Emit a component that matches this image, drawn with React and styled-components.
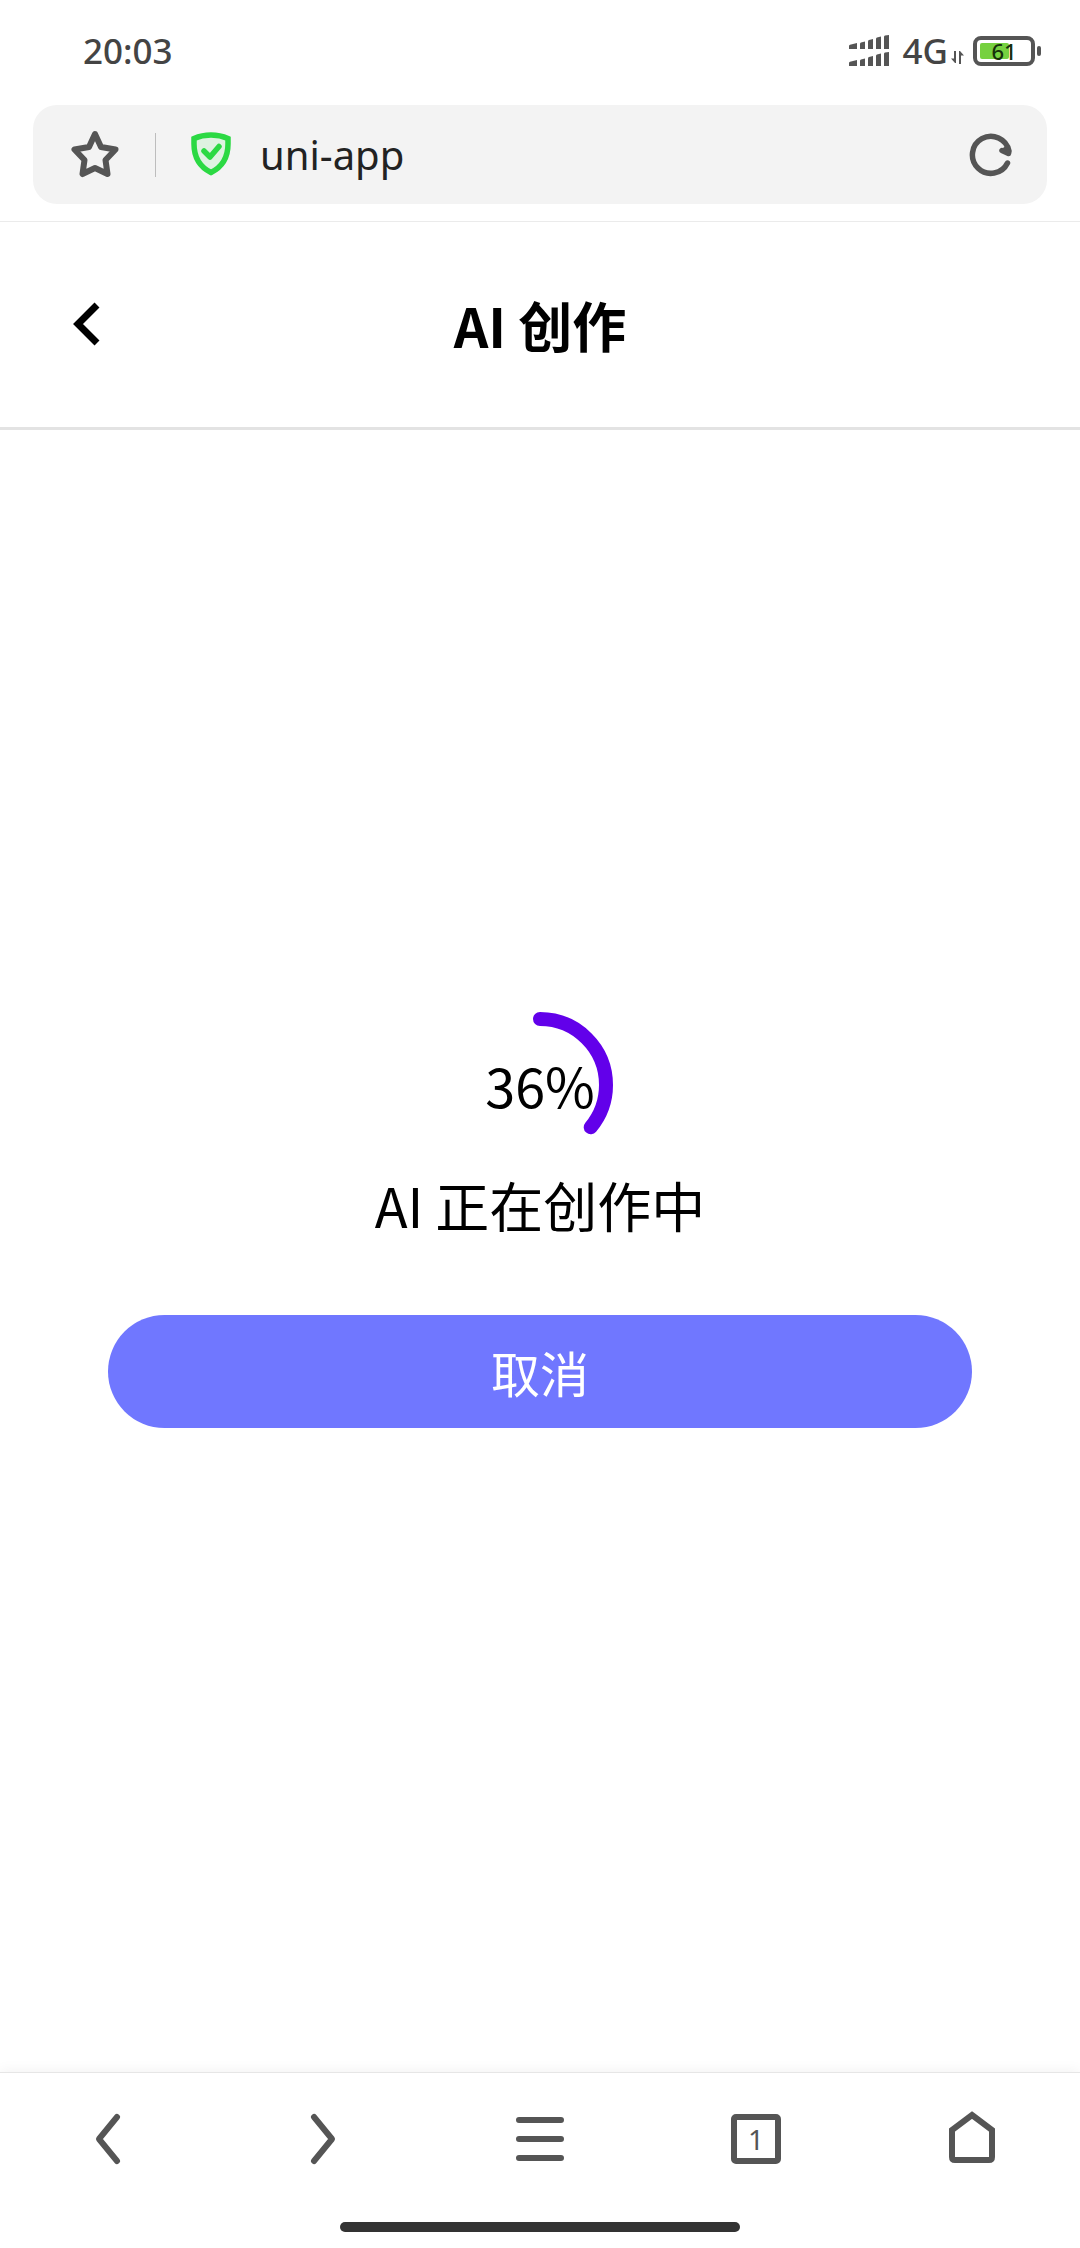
import React from "react";
import styled, { createGlobalStyle } from "styled-components";

const uiFont = `"Noto Sans", "Noto Sans CJK SC", sans-serif`;
const pageFont = `"Noto Sans CJK SC", "Noto Sans", sans-serif`;
const ink = "#555555";

const GlobalStyle = createGlobalStyle`
  *, *::before, *::after { box-sizing: border-box; }
  body { margin: 0; background: #ffffff; }
  button { margin: 0; padding: 0; border: 0; background: none; cursor: pointer; }
  svg { display: block; flex: none; }
`;

const Page = styled.div`
  display: flex;
  flex-direction: column;
  min-height: 100vh;
  background: #ffffff;
  font-family: ${pageFont};
  color: #000000;
`;

const StatusBar = styled.div`
  display: flex;
  align-items: center;
  justify-content: space-between;
  height: 101px;
  padding: 0 39px 0 83px;
  font-family: ${uiFont};
  font-size: 35px;
  font-weight: 500;
  line-height: 40px;
  color: #444444;
`;

const StatusIcons = styled.div`
  display: flex;
  align-items: center;
`;

const Network = styled.div`
  display: flex;
  align-items: flex-end;
  gap: 3px;
  margin: 0 9px 0 12px;

  svg { margin-bottom: 7px; }
`;

const Battery = styled.div`
  display: flex;
  align-items: center;
  gap: 2px;

  &::after {
    content: "";
    width: 4px;
    height: 10px;
    border-radius: 2px;
    background: ${ink};
  }
`;

const BatteryCell = styled.div`
  display: grid;
  align-items: center;
  width: 62px;
  height: 30px;
  padding: 0 3px;
  border: 4px solid ${ink};
  border-radius: 8px;
`;

const BatteryFill = styled.div`
  grid-area: 1 / 1;
  height: 16px;
  border-radius: 2px;
  background: #76d13f;
`;

const BatteryText = styled.span`
  grid-area: 1 / 1;
  font-size: 22px;
  line-height: 22px;
  text-align: center;
  color: #16300a;
`;

const AddressArea = styled.div`
  padding: 4px 33px 17px;
  border-bottom: 1px solid #ebebeb;
`;

const AddressBar = styled.div`
  display: flex;
  align-items: center;
  height: 99px;
  padding: 0 34px 0 37px;
  border-radius: 24px;
  background: #f3f3f3;
`;

const Divider = styled.span`
  width: 1px;
  height: 44px;
  margin: 0 34px 0 35px;
  background: #bdbdbd;
`;

const AddressInput = styled.input`
  flex: 1;
  min-width: 0;
  margin-left: 28px;
  padding: 0;
  border: 0;
  outline: 0;
  background: none;
  font-family: ${uiFont};
  font-size: 40px;
  line-height: 56px;
  color: #222222;
`;

const Header = styled.header`
  display: grid;
  grid-template-columns: 1fr auto 1fr;
  align-items: center;
  height: 208px;
  padding: 0 72px;
  border-bottom: 3px solid #e3e3e3;
`;

const BackButton = styled.button`
  justify-self: start;
`;

const Title = styled.h1`
  margin: 0;
  font-size: 54px;
  font-weight: 700;
  line-height: 80px;
`;

const Main = styled.main`
  flex: 1;
  display: flex;
  flex-direction: column;
  align-items: center;
  justify-content: center;
  padding: 0 10% 62px;
`;

const Progress = styled.div`
  display: grid;
  place-items: center;

  > * { grid-area: 1 / 1; }
`;

const Percent = styled.span`
  font-size: 54px;
  line-height: 80px;
`;

const Message = styled.p`
  margin: 7px 0 70px;
  font-size: 54px;
  line-height: 80px;
`;

const CancelButton = styled.button`
  width: 100%;
  height: 113px;
  border-radius: 57px;
  background: #7077ff;
  font-family: inherit;
  font-size: 49px;
  line-height: 72px;
  color: #ffffff;
`;

const BottomBar = styled.footer`
  border-top: 1px solid #e6e6e6;
  background: #ffffff;
  box-shadow: 0 -2px 12px rgba(0, 0, 0, 0.05);
`;

const NavRow = styled.nav`
  display: grid;
  grid-template-columns: repeat(5, 1fr);
  height: 131px;
`;

const NavButton = styled.button`
  display: grid;
  place-items: center;
`;

const TabCount = styled.span`
  display: grid;
  place-items: center;
  width: 50px;
  height: 50px;
  border: 6px solid ${ink};
  border-radius: 5px;
  font-family: ${uiFont};
  font-size: 28px;
  line-height: 28px;
  color: ${ink};
`;

const HomeIndicator = styled.div`
  width: 37%;
  height: 10px;
  margin: 18px auto 16px;
  border-radius: 5px;
  background: #333333;
`;

const SignalIcon = () => (
  <svg width="42" height="32" viewBox="0 0 42 32" fill={ink} aria-hidden="true">
    {[0, 17].map((y) => (
      <g key={y} transform={`translate(0 ${y})`}>
        <path d="M0 14v-3q0-1 1-1.300L8 8V14z" />
        <path d="M11 14V9q0-1 1-1.400L16 6.500V14z" />
        <path d="M19 14V6.500q0-1 1-1.400L24 4V14z" />
        <path d="M27 14V4q0-1 1-1.400L32 1.500V14z" />
        <path d="M35 14V2q0-1 1-1.400L40 0V14z" />
      </g>
    ))}
  </svg>
);

const DataIcon = () => (
  <svg width="13" height="13" viewBox="0 0 13 13" fill={ink} aria-hidden="true">
    <path d="M3 0h2v12H4L0 7.500h3zM8 13V0h1l4 4.500h-3V13z" />
  </svg>
);

const StarIcon = () => (
  <svg width="50" height="50" viewBox="0 0 50 50" fill="none" stroke={ink} strokeWidth="6" strokeLinejoin="round" aria-hidden="true">
    <path d="M25 4L31 17L45.500 19.500L35.500 30L37.500 44L25 38L12.500 44L14.500 30L4.500 19.500L19 17Z" />
  </svg>
);

const ShieldIcon = () => (
  <svg width="42" height="46" viewBox="0 0 42 46" fill="none" stroke="#2bd943" aria-hidden="true">
    <path d="M21 3Q30 3 38 6.500V12Q38 32 21 40.500Q4 32 4 12V6.500Q12 3 21 3Z" fill="#def2e1" strokeWidth="5.500" />
    <path d="M14 19L20 25L29 14.500" strokeWidth="5.500" strokeLinecap="round" strokeLinejoin="round" />
  </svg>
);

const RefreshIcon = () => (
  <svg width="44" height="44" viewBox="0 0 44 44" fill="none" stroke={ink} strokeWidth="5.500" strokeLinecap="round" strokeLinejoin="round" aria-hidden="true">
    <path d="M38.500 30A18.500 18.500 0 1 1 40 18L39.500 20.500L33 17.500" />
    <path d="M33 17.500L39.500 20.500L38 14Z" fill={ink} strokeWidth="3" />
  </svg>
);

const BackIcon = () => (
  <svg width="28" height="46" viewBox="0 0 28 46" fill="none" stroke="#000000" strokeWidth="7" aria-hidden="true">
    <path d="M25 3L6 22L25 41" />
  </svg>
);

const ProgressRing = ({ value }) => {
  const circumference = 2 * Math.PI * 66;
  return (
    <svg width="146" height="146" viewBox="0 0 146 146" fill="none" aria-hidden="true">
      <circle
        cx="73"
        cy="73"
        r="66"
        stroke="#6200ea"
        strokeWidth="14"
        strokeLinecap="round"
        strokeDasharray={`${(circumference * value) / 100} ${circumference}`}
        transform="rotate(-90 73 73)"
      />
    </svg>
  );
};

const NavIcon = ({ d, join = "round" }) => (
  <svg width="56" height="56" viewBox="0 0 56 56" fill="none" stroke={ink} strokeWidth="6" strokeLinecap="round" strokeLinejoin={join} aria-hidden="true">
    <path d={d} />
  </svg>
);

export default function App() {
  const progress = 36;
  return (
    <Page>
      <GlobalStyle />
      <StatusBar>
        <span>20:03</span>
        <StatusIcons>
          <SignalIcon />
          <Network>
            <span>4G</span>
            <DataIcon />
          </Network>
          <Battery>
            <BatteryCell>
              <BatteryFill style={{ width: "61%" }} />
              <BatteryText>61</BatteryText>
            </BatteryCell>
          </Battery>
        </StatusIcons>
      </StatusBar>
      <AddressArea>
        <AddressBar>
          <button type="button" aria-label="收藏"><StarIcon /></button>
          <Divider />
          <ShieldIcon />
          <AddressInput type="text" aria-label="地址" defaultValue="uni-app" />
          <button type="button" aria-label="刷新"><RefreshIcon /></button>
        </AddressBar>
      </AddressArea>
      <Header>
        <BackButton type="button" aria-label="返回"><BackIcon /></BackButton>
        <Title>AI 创作</Title>
      </Header>
      <Main>
        <Progress role="progressbar" aria-label="AI 创作" aria-valuenow={progress} aria-valuemin={0} aria-valuemax={100}>
          <ProgressRing value={progress} />
          <Percent>{progress}%</Percent>
        </Progress>
        <Message>AI 正在创作中</Message>
        <CancelButton type="button">取消</CancelButton>
      </Main>
      <BottomBar>
        <NavRow aria-label="浏览器">
          <NavButton type="button" aria-label="后退"><NavIcon d="M37 6L19 28L37 50" /></NavButton>
          <NavButton type="button" aria-label="前进"><NavIcon d="M18 6L36 28L18 50" /></NavButton>
          <NavButton type="button" aria-label="菜单"><NavIcon d="M7 9H49M7 28H49M7 47H49" /></NavButton>
          <NavButton type="button" aria-label="标签页"><TabCount>1</TabCount></NavButton>
          <NavButton type="button" aria-label="主页"><NavIcon join="miter" d="M28 4L48 19V46Q48 49 45 49H11Q8 49 8 46V19Z" /></NavButton>
        </NavRow>
        <HomeIndicator />
      </BottomBar>
    </Page>
  );
}
